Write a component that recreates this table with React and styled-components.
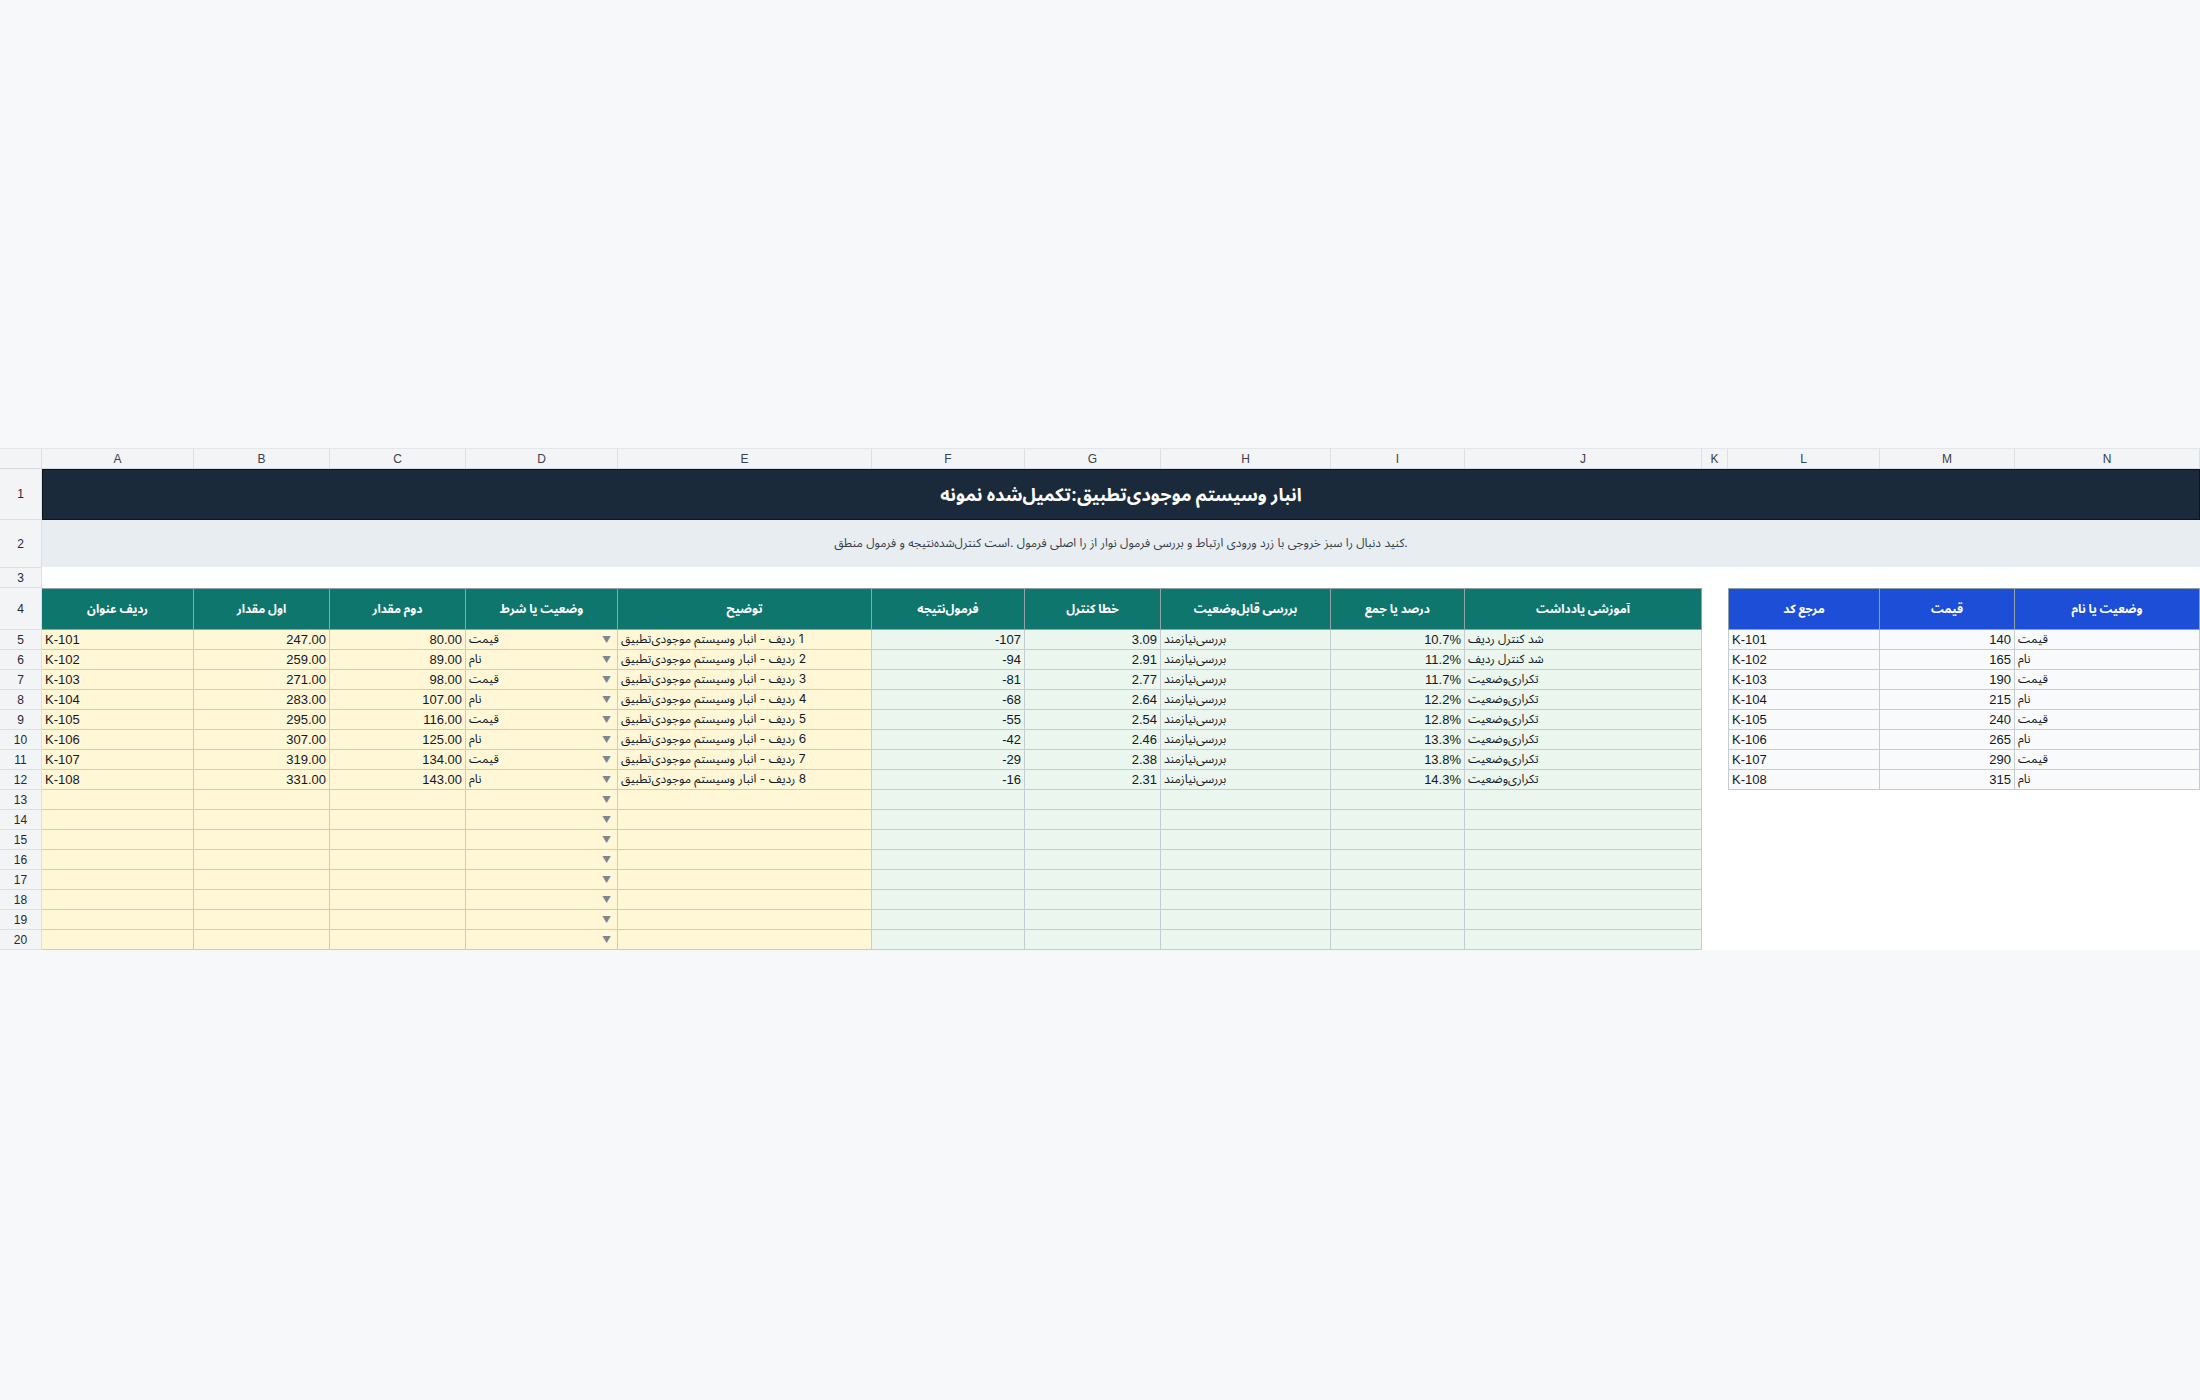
import React from "react";
import styled, { createGlobalStyle } from "styled-components";

const ZW = "\u200c";

const GlobalStyle = createGlobalStyle`
  html, body {
    margin: 0;
    padding: 0;
    background: #f6f8fa;
  }
  body {
    font-family: Inter, "Noto Sans Arabic", "Noto Sans Arabic UI", "Liberation Sans", sans-serif;
    color: #111827;
  }
`;

const LATIN = `"Liberation Sans", Arial, sans-serif`;

const COLS = ["A", "B", "C", "D", "E", "F", "G", "H", "I", "J", "K", "L", "M", "N"];

const tones = {
  input: { bg: "#fff7d6", line: "#c4ccd4" },
  output: { bg: "#eaf6ee", line: "#c4ccd4" },
  ref: { bg: "#f8fafc", line: "#c4ccd4" },
  blank: { bg: "#ffffff", line: "transparent" },
};

const headTones = {
  green: "#0f766e",
  blue: "#1d4ed8",
  blank: "#ffffff",
};

const Page = styled.div`
  min-height: 100vh;
  display: flex;
  align-items: center;
`;

const Sheet = styled.div`
  width: 2200px;
  margin-top: -2px;
  display: grid;
  grid-template-columns: 42px 152px 136px 136px 152px 254px 153px 136px 170px 134px 237px 26px 152px 135px 185px;
  grid-template-rows: 21px 51px 48px 20px 42px repeat(16, 20px);
  background: #ffffff;
  font-size: 12px;
`;

const ColHead = styled.div`
  background: #f3f4f6;
  border-right: 1px solid #dcdfe3;
  border-bottom: 1px solid #d6dadf;
  border-top: 1px solid #e3e6ea;
  display: flex;
  align-items: center;
  justify-content: center;
  font-family: ${LATIN};
  font-size: 12px;
  color: #374151;
`;

const RowNum = styled.div`
  background: #f3f4f6;
  border-right: 1px solid #dcdfe3;
  border-bottom: 1px solid #dcdfe3;
  display: flex;
  align-items: center;
  justify-content: center;
  font-family: ${LATIN};
  font-size: 12px;
  color: #1f2937;
`;

const TitleCell = styled.div`
  grid-column: 2 / -1;
  background: #1b2a3a;
  border: 1px solid #0c1620;
  color: #ffffff;
  font-size: 18px;
  font-weight: 700;
  display: flex;
  align-items: center;
  justify-content: center;
  direction: rtl;
`;

const NoteCell = styled.div`
  grid-column: 2 / -1;
  background: #e8edf2;
  border-bottom: 1px solid #ffffff;
  color: #333d48;
  font-size: 12px;
  display: flex;
  align-items: center;
  justify-content: center;
  direction: rtl;
`;

const GapRow = styled.div`
  grid-column: 2 / -1;
  background: #ffffff;
`;

const HeadCell = styled.div`
  background: ${(p) => headTones[p.$tone]};
  color: #ffffff;
  font-weight: 700;
  display: flex;
  align-items: center;
  justify-content: center;
  border-top: 1px solid ${(p) => (p.$tone === "blank" ? "transparent" : "#8fa3a8")};
  border-right: 1px solid ${(p) => (p.$tone === "blank" ? "transparent" : "#8fa3a8")};
  border-left: ${(p) => (p.$lead ? "1px solid #8fa3a8" : "none")};
  border-bottom: 1px solid ${(p) => (p.$tone === "blank" ? "transparent" : "#8fa3a8")};
`;

const Cell = styled.div`
  background: ${(p) => tones[p.$tone].bg};
  border-right: 1px solid ${(p) => tones[p.$tone].line};
  border-bottom: 1px solid ${(p) => tones[p.$tone].line};
  border-left: ${(p) => (p.$lead ? `1px solid ${tones[p.$tone].line}` : "none")};
  display: flex;
  align-items: center;
  justify-content: ${(p) => (p.$num || p.$rtl ? "flex-end" : "flex-start")};
  padding: 0 3px;
  white-space: nowrap;
  overflow: hidden;
  direction: ${(p) => (p.$rtl ? "rtl" : "ltr")};
  ${(p) => (p.$latin ? `font-family: ${LATIN}; font-size: 13px;` : "")}
`;

const PickCell = styled(Cell)`
  justify-content: space-between;
`;

const Caret = styled.span`
  font-size: 9px;
  color: #7d8590;
  margin-left: auto;
  padding-right: 3px;
`;

const rows = [
  { a: "K-101", b: "247.00", c: "80.00", d: "قیمت", f: "-107", g: "3.09", i: "10.7%", j: "شد کنترل ردیف", m: "140" },
  { a: "K-102", b: "259.00", c: "89.00", d: "نام", f: "-94", g: "2.91", i: "11.2%", j: "شد کنترل ردیف", m: "165" },
  { a: "K-103", b: "271.00", c: "98.00", d: "قیمت", f: "-81", g: "2.77", i: "11.7%", j: `تکراری${ZW}وضعیت`, m: "190" },
  { a: "K-104", b: "283.00", c: "107.00", d: "نام", f: "-68", g: "2.64", i: "12.2%", j: `تکراری${ZW}وضعیت`, m: "215" },
  { a: "K-105", b: "295.00", c: "116.00", d: "قیمت", f: "-55", g: "2.54", i: "12.8%", j: `تکراری${ZW}وضعیت`, m: "240" },
  { a: "K-106", b: "307.00", c: "125.00", d: "نام", f: "-42", g: "2.46", i: "13.3%", j: `تکراری${ZW}وضعیت`, m: "265" },
  { a: "K-107", b: "319.00", c: "134.00", d: "قیمت", f: "-29", g: "2.38", i: "13.8%", j: `تکراری${ZW}وضعیت`, m: "290" },
  { a: "K-108", b: "331.00", c: "143.00", d: "نام", f: "-16", g: "2.31", i: "14.3%", j: `تکراری${ZW}وضعیت`, m: "315" },
];

const heads = [
  ["ردیف عنوان", "green"],
  ["اول مقدار", "green"],
  ["دوم مقدار", "green"],
  ["وضعیت یا شرط", "green"],
  ["توضیح", "green"],
  [`فرمول${ZW}نتیجه`, "green"],
  ["خطا کنترل", "green"],
  [`بررسی قابل${ZW}وضعیت`, "green"],
  ["درصد یا جمع", "green"],
  ["آموزشی یادداشت", "green"],
  ["", "blank"],
  ["مرجع کد", "blue"],
  ["قیمت", "blue"],
  ["وضعیت یا نام", "blue"],
];

function DataRow({ n, row }) {
  const r = row || {};
  const ref = row ? "ref" : "blank";
  return (
    <>
      <RowNum>{n}</RowNum>
      <Cell $tone="input" $latin>{r.a}</Cell>
      <Cell $tone="input" $num $latin>{r.b}</Cell>
      <Cell $tone="input" $num $latin>{r.c}</Cell>
      <PickCell $tone="input">
        {r.d}
        <Caret>▼</Caret>
      </PickCell>
      <Cell $tone="input" $rtl>
        {row ? `${n - 4} ردیف - انبار وسیستم موجودی${ZW}تطبیق` : ""}
      </Cell>
      <Cell $tone="output" $num $latin>{r.f}</Cell>
      <Cell $tone="output" $num $latin>{r.g}</Cell>
      <Cell $tone="output">{row ? `بررسی${ZW}نیازمند` : ""}</Cell>
      <Cell $tone="output" $num $latin>{r.i}</Cell>
      <Cell $tone="output">{r.j}</Cell>
      <Cell $tone="blank" />
      <Cell $tone={ref} $lead={!!row} $latin>{r.a}</Cell>
      <Cell $tone={ref} $num $latin>{r.m}</Cell>
      <Cell $tone={ref}>{r.d}</Cell>
    </>
  );
}

export default function App() {
  const body = [];
  for (let n = 5; n <= 20; n++) {
    body.push(<DataRow key={n} n={n} row={rows[n - 5]} />);
  }
  return (
    <>
      <GlobalStyle />
      <Page>
        <Sheet>
          <ColHead />
          {COLS.map((c) => (
            <ColHead key={c}>{c}</ColHead>
          ))}

          <RowNum>1</RowNum>
          <TitleCell>{`انبار وسیستم موجودی${ZW}تطبیق:تکمیل${ZW}شده نمونه`}</TitleCell>

          <RowNum>2</RowNum>
          <NoteCell>
            {`.کنید دنبال را سبز خروجی با زرد ورودی ارتباط و بررسی فرمول نوار از را اصلی فرمول .است کنترل${ZW}شده${ZW}نتیجه و فرمول منطق`}
          </NoteCell>

          <RowNum>3</RowNum>
          <GapRow />

          <RowNum>4</RowNum>
          {heads.map(([label, tone], i) => (
            <HeadCell key={i} $tone={tone} $lead={i === 11}>
              {label}
            </HeadCell>
          ))}

          {body}
        </Sheet>
      </Page>
    </>
  );
}
